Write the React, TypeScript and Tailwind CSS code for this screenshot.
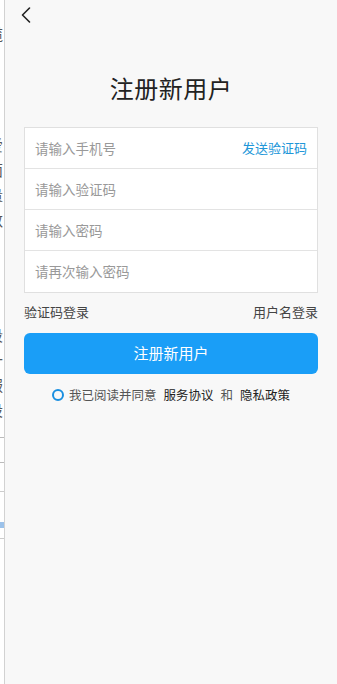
import { ChevronLeft } from 'lucide-react'

const font = { fontFamily: '"Noto Sans CJK SC", "Noto Sans", sans-serif' }

function BehindStrip() {
  // sliver of the previous page peeking out on the left
  const rows = [
    { t: '缆', mt: 'mt-[24px]' },
    { t: '爱', mt: 'mt-[92px]' },
    { t: '面', mt: 'mt-[6px]' },
    { t: '量', mt: 'mt-[6px]' },
    { t: '数', mt: 'mt-[6px]' },
    { t: '段', mt: 'mt-[96px]' },
    { t: '十', mt: 'mt-[6px]' },
    { t: '服', mt: 'mt-[6px]' },
    { t: '设', mt: 'mt-[6px]' },
  ]
  return (
    <div className="w-[4px] shrink-0 overflow-hidden bg-white">
      <div className="w-[20px] -ml-[12px] flex flex-col text-[15px] leading-[19px] text-[#555]">
        {rows.map((r, i) => (
          <span key={i} className={r.mt}>{r.t}</span>
        ))}
        <div className="mt-[18px] h-px bg-[#bbb]" />
        <div className="mt-[24px] h-px bg-[#bbb]" />
        <div className="mt-[28px] h-px bg-[#ccc]" />
        <div className="mt-[30px] h-[6px] bg-[#9cc2ea]" />
        <div className="mt-[10px] h-px bg-[#ccc]" />
      </div>
    </div>
  )
}

function Field({ placeholder, action }: { placeholder: string; action?: string }) {
  return (
    <div className="flex items-center justify-between h-[41px] pl-[10px] pr-[10px] border-b border-[#e3e3e3] last:border-b-0">
      <span className="text-[13.5px] text-[#999]">{placeholder}</span>
      {action && <span className="text-[13px] text-[#2196d8]">{action}</span>}
    </div>
  )
}

export default function App() {
  return (
    <div className="flex w-[337px] h-[684px] overflow-hidden" style={font}>
      <BehindStrip />
      <div className="flex-1 flex flex-col bg-[#f8f8f8] border-l border-[#d2d2d2]">
        <div className="h-[30px] flex items-center pl-[7px]">
          <ChevronLeft className="w-[28px] h-[28px] text-[#222]" strokeWidth={1.4} />
        </div>
        <h1 className="mt-[42px] text-center text-[24px] leading-[32px] text-[#222] tracking-[0.5px]">注册新用户</h1>
        <div className="mx-[19px] mt-[23px] bg-white border border-[#e0e0e0]">
          <Field placeholder="请输入手机号" action="发送验证码" />
          <Field placeholder="请输入验证码" />
          <Field placeholder="请输入密码" />
          <Field placeholder="请再次输入密码" />
        </div>
        <div className="mx-[19px] mt-[10px] flex justify-between text-[13px] leading-[18px] text-[#444]">
          <span>验证码登录</span>
          <span>用户名登录</span>
        </div>
        <button className="mx-[19px] mt-[12px] h-[41px] rounded-[6px] bg-[#1a9ef7] text-white text-[15px]">注册新用户</button>
        <div className="mt-[12px] flex items-center justify-center text-[12.5px] leading-[18px] text-[#555]">
          <span className="w-[12px] h-[12px] rounded-full border-2 border-[#1a8fe0] mr-[5px]" />
          <span>我已阅读并同意</span>
          <span className="ml-[7px] text-[#222]">服务协议</span>
          <span className="mx-[7px]">和</span>
          <span className="text-[#222]">隐私政策</span>
        </div>
      </div>
    </div>
  )
}
